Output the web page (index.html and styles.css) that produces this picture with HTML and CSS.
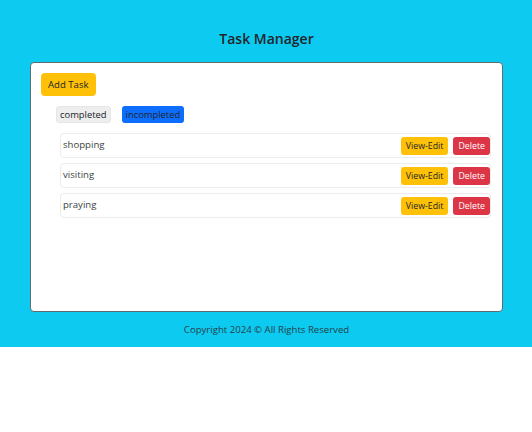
FILE: index.html
```html
<!DOCTYPE html>
<html>
<head>
<meta charset="utf-8">
<link rel="stylesheet" href="styles.css">
</head>
<body>
<div class="app">
  <h1 class="title">Task Manager</h1>
  <div class="card">
    <button class="btn btn-add">Add Task</button>
    <div class="filters">
      <span class="chip chip-light">completed</span>
      <span class="chip chip-blue">incompleted</span>
    </div>
    <ul class="tasks">
      <li class="task"><span class="name">shopping</span><span class="actions"><button class="btn btn-sm btn-warn">View-Edit</button><button class="btn btn-sm btn-danger">Delete</button></span></li>
      <li class="task"><span class="name">visiting</span><span class="actions"><button class="btn btn-sm btn-warn">View-Edit</button><button class="btn btn-sm btn-danger">Delete</button></span></li>
      <li class="task"><span class="name">praying</span><span class="actions"><button class="btn btn-sm btn-warn">View-Edit</button><button class="btn btn-sm btn-danger">Delete</button></span></li>
    </ul>
  </div>
  <footer class="footer">Copyright 2024 © All Rights Reserved</footer>
</div>
</body>
</html>
```
FILE: styles.css
```css
* { box-sizing: border-box; }
body {
  margin: 0;
  font-family: "Open Sans", "Noto Sans", sans-serif;
  color: #212529;
  background: #fff;
}
.app {
  background: #0dcaf0;
  padding: 29px 29px 0 30px;
  height: 347px;
}
.title {
  margin: 0;
  text-align: center;
  font-size: 14px;
  font-weight: 600;
  line-height: 20px;
  height: 33px;
}
.card {
  background: #fff;
  border: 1px solid #5f6b70;
  border-radius: 4px;
  height: 250px;
  padding: 10px 10px;
}
.btn {
  font-family: inherit;
  border: none;
  cursor: pointer;
  color: #212529;
}
.btn-add {
  display: block;
  background: #ffc107;
  border-radius: 4px;
  height: 23px;
  padding: 0 7px;
  font-size: 9.6px;
  line-height: 23px;
}
.filters {
  display: flex;
  gap: 11px;
  margin: 10px 0 0 15px;
}
.chip {
  display: inline-block;
  height: 17px;
  line-height: 17px;
  padding: 0 4px;
  font-size: 9.4px;
  border-radius: 3px;
}
.chip-light { background: #eeeeee; border: 1px solid #e6e6e6; line-height: 15px; padding: 0 3px; }
.chip-blue { background: #0d6efd; }
.tasks {
  list-style: none;
  margin: 10px 1px 0 19px;
  padding: 0;
  display: flex;
  flex-direction: column;
  gap: 5px;
}
.task {
  display: flex;
  align-items: center;
  justify-content: space-between;
  height: 25px;
  border: 1px solid #ececec;
  border-radius: 4px;
  padding: 0 0 0 2px;
}
.name {
  font-size: 9.6px;
  color: #3a3f44;
  margin-top: -3px;
}
.actions { display: flex; gap: 5px; }
.btn-sm {
  height: 18px;
  line-height: 18px;
  padding: 0 5px;
  font-size: 8.8px;
  border-radius: 3px;
}
.btn-warn { background: #ffc107; }
.btn-danger { background: #dc3545; color: #fff; }
.footer {
  text-align: center;
  font-size: 9.6px;
  line-height: 14px;
  padding-top: 11px;
  color: #24424a;
}
```
